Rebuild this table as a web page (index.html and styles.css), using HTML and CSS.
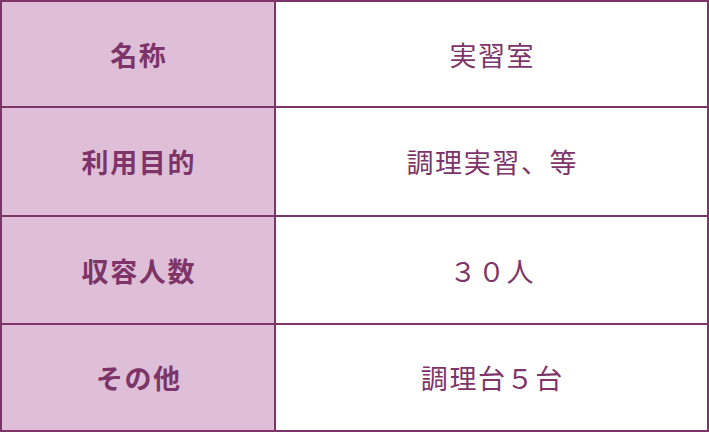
FILE: index.html
```html
<!DOCTYPE html>
<html lang="ja">
<head>
<meta charset="utf-8">
<title>実習室</title>
<link rel="stylesheet" href="styles.css">
</head>
<body>
<div class="spec">
  <div class="head">名称</div>
  <div class="val">実習室</div>
  <div class="head">利用目的</div>
  <div class="val">調理実習、等</div>
  <div class="head">収容人数</div>
  <div class="val">３０人</div>
  <div class="head">その他</div>
  <div class="val">調理台５台</div>
</div>
</body>
</html>
```

FILE: styles.css
```css
html, body {
  margin: 0;
  padding: 0;
  background: #ffffff;
}
.spec {
  display: grid;
  grid-template-columns: 272px 431px;
  grid-template-rows: 104px 107px 106px 105px;
  gap: 2px;
  padding: 2px;
  width: 709px;
  height: 432px;
  box-sizing: border-box;
  background: #7d3569;
  font-family: "Noto Sans CJK JP", "Noto Sans", sans-serif;
  font-size: 27px;
  color: #7d3569;
}
.head, .val {
  display: flex;
  align-items: center;
  justify-content: center;
  letter-spacing: 1.6px;
  text-indent: 1.6px;
  line-height: 1;
}
.head {
  background: #dfbfd7;
  font-weight: 700;
}
.val {
  background: #ffffff;
  font-weight: 400;
}
```
